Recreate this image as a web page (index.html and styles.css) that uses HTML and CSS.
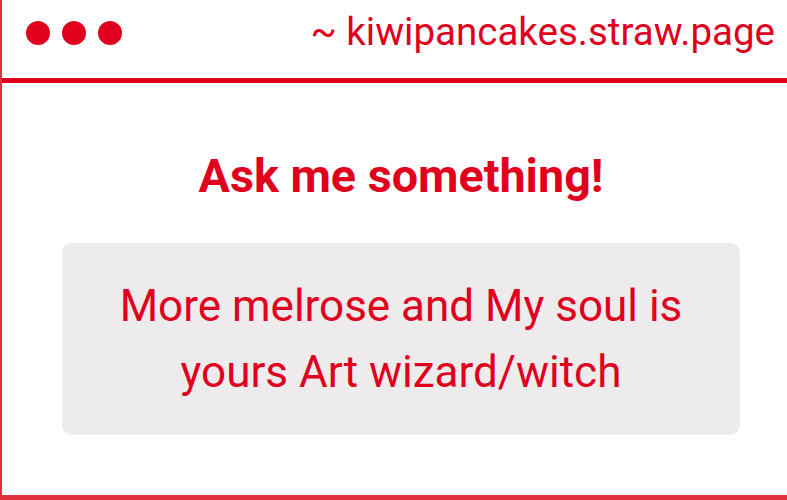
FILE: index.html
```html
<!DOCTYPE html>
<html lang="en">
<head>
    <meta charset="UTF-8">
    <meta name="viewport" content="width=device-width, initial-scale=1.0">
    <title>kiwipancakes</title>
    <link rel="stylesheet" href="styles.css">
</head>
<body>
    <!-- Fenêtre -->
    <div class="window">
        <div class="titlebar">
            <div class="dots">
                <span class="dot"></span>
                <span class="dot"></span>
                <span class="dot"></span>
            </div>
            <span class="url">~ kiwipancakes.straw.page</span>
        </div>

        <div class="content">
            <h1>Ask me something!</h1>
            <div class="question">
                More melrose and My soul is<br>
                yours Art wizard/witch
            </div>
        </div>
    </div>
</body>
</html>
```

FILE: styles.css
```css
body {
    font-family: Roboto, "Liberation Sans", sans-serif;
    margin: 0;
    padding: 0;
    overflow: hidden;
    background: #fff;
}
.window {
    height: 500px;
    box-sizing: border-box;
    border-left: 2px solid #e2323f;
    border-bottom: 5px solid #e2323f;
    color: #e0001e;
}
.titlebar {
    height: 83px;
    box-sizing: border-box;
    display: flex;
    align-items: flex-start;
    justify-content: space-between;
    padding: 0 12px 0 24px;
    border-bottom: 5px solid #e0001e;
}
.dots {
    display: flex;
    gap: 12px;
    margin-top: 21px;
}
.dot {
    width: 24px;
    height: 24px;
    border-radius: 50%;
    background: #e0001e;
}
.url {
    font-size: 38.5px;
    margin-top: 9px;
}
.content {
    padding: 0 47px 0 60px;
    display: flex;
    flex-direction: column;
    align-items: stretch;
}
.content h1 {
    margin: 66px 0 0 0;
    height: 94px;
    font-size: 46.7px;
    font-weight: 700;
    text-align: center;
}
.question {
    background: #edebec;
    border-radius: 10px;
    text-align: center;
    font-size: 44px;
    line-height: 66px;
    padding: 30px 0;
}
```
